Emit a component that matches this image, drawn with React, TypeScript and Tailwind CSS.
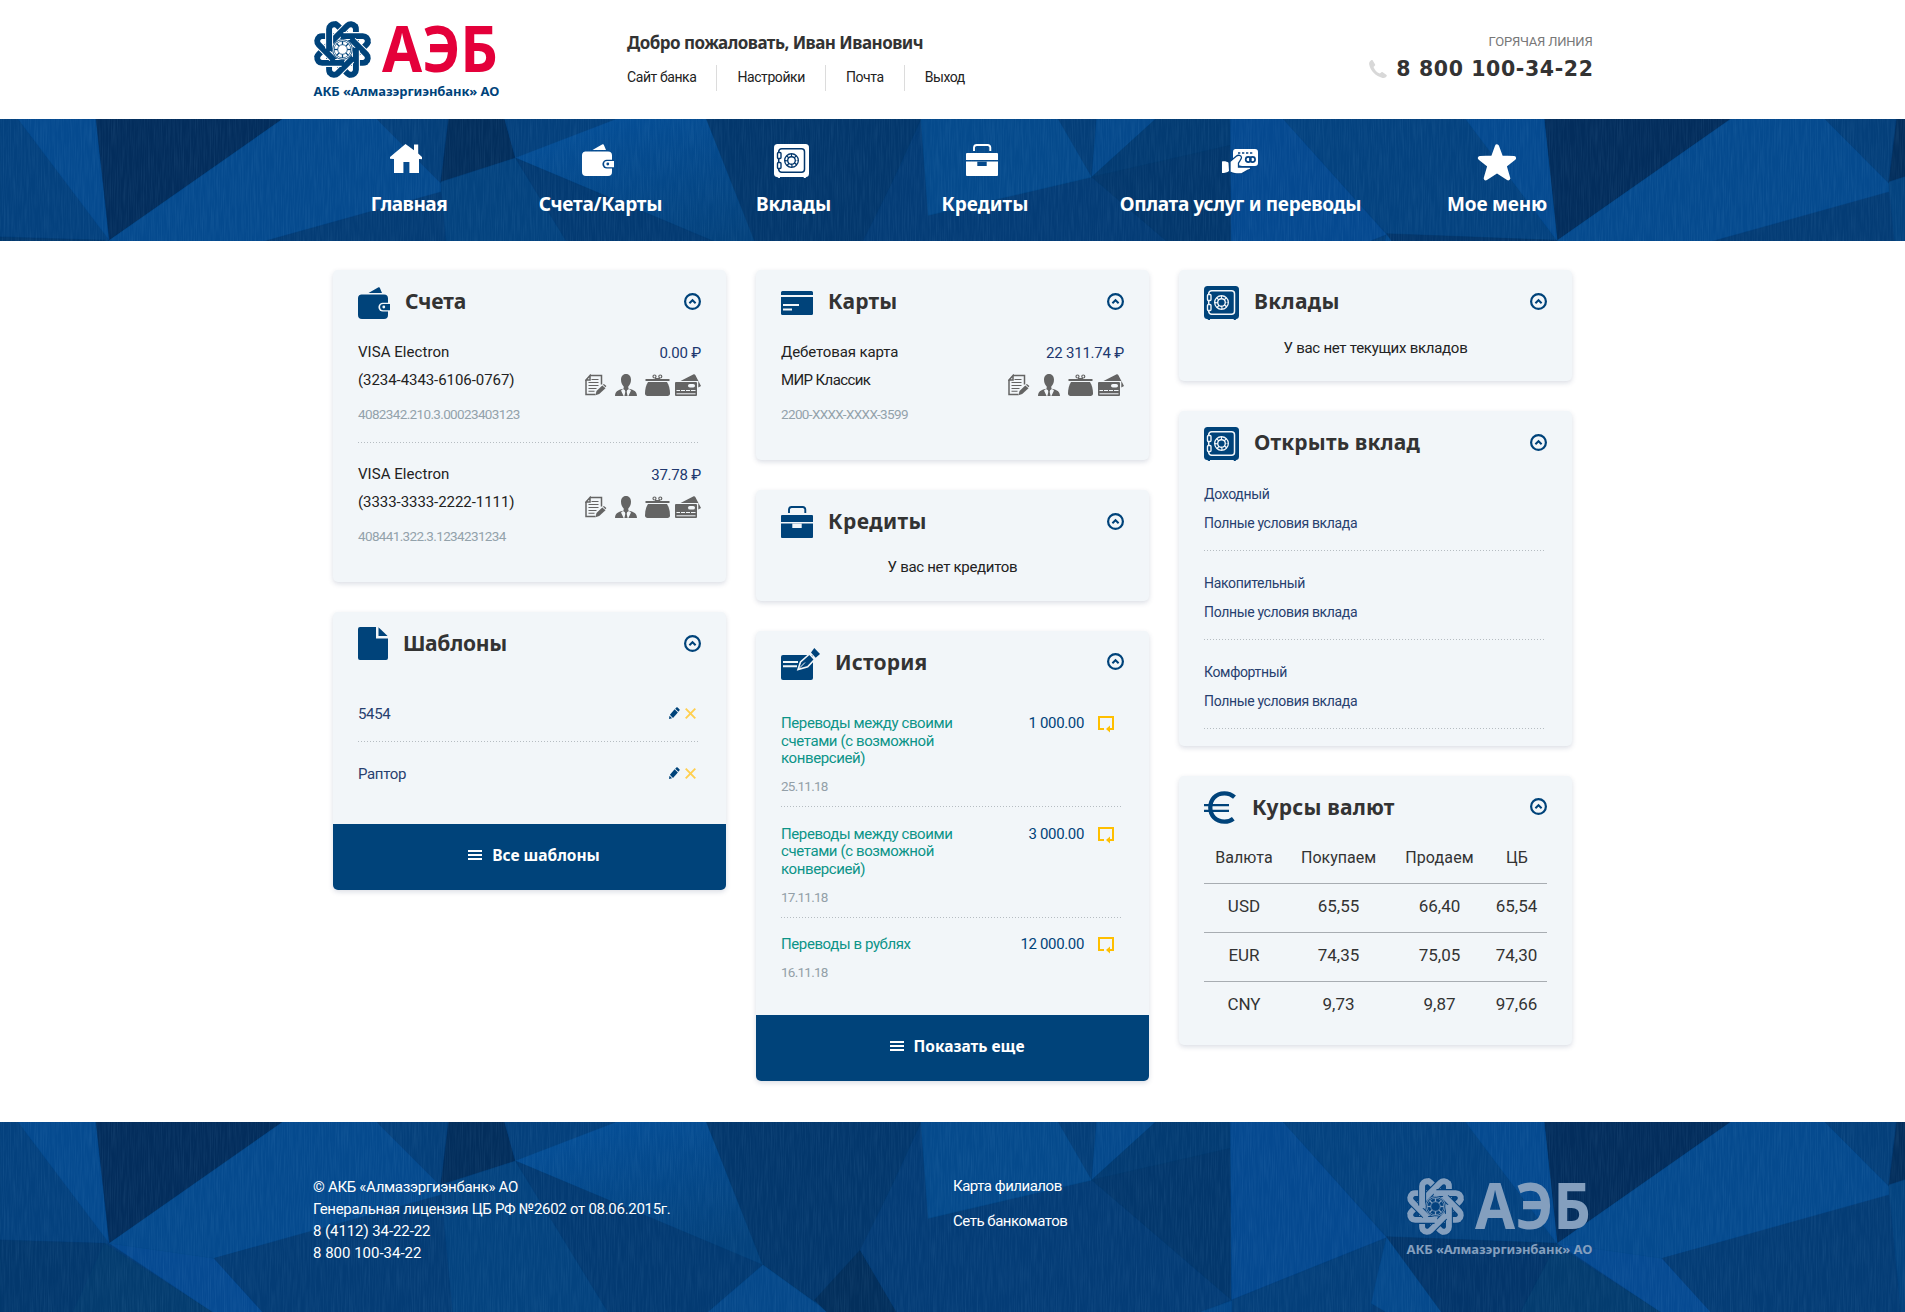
import type { ReactNode } from "react";

/* ---------- faceted blue backdrop ---------- */

const FACETS: [string, string][] = [
  ["#04417e", "0,21 30,21 180,385 0,375"],
  ["#054a8f", "30,21 158,21 180,385"],
  ["#032d5c", "158,21 465,21 180,385"],
  ["#03386d", "0,375 172,385 120,591 0,591"],
  ["#043c6f", "172,385 350,591 120,591"],
  ["#064a92", "180,385 352,430 432,591 350,591"],
  ["#054a8e", "465,21 620,21 725,213 725,245 352,430 180,385"],
  ["#043c75", "352,430 725,240 745,591 432,591"],
  ["#043f7a", "620,21 738,21 725,213"],
  ["#032e5c", "738,21 830,21 848,138 725,213"],
  ["#04407c", "830,21 1015,21 848,138"],
  ["#04437f", "848,138 1000,591 745,591 725,210"],
  ["url(#facetFade)", "1015,21 1162,21 1255,450 848,138"],
  ["#03376c", "1162,21 1515,21 1420,400 1340,560 1255,450"],
  ["#033a72", "848,138 1255,450 1165,591 1000,591"],
  ["#05488a", "1255,450 1362,591 1165,591"],
  ["#032f5c", "1415,405 1475,591 1360,591 1340,555"],
  ["#043c76", "1510,60 1530,310 1796,195 2026,555 1980,591 1475,591 1415,405"],
  ["#054a8c", "1515,21 1741,21 1796,195 1527,310"],
  ["#043e78", "1741,21 1804,21 1796,195"],
  ["#05498c", "1804,21 1901,21 1796,195"],
  ["#033b72", "1901,21 2024,21 2024,100 1796,195"],
  ["#03376c", "1796,195 2024,100 2026,555"],
  ["#054990", "2024,21 2111,21 2281,368 2026,555"],
  ["#04427f", "2111,21 2411,21 2561,385 2281,365"],
  ["#054a90", "2411,21 2540,21 2561,385"],
  ["#043f7a", "2281,368 2026,555 1981,591 2256,591 2266,480"],
  ["#05488a", "2026,558 2026,591 1975,591"],
  ["#05498c", "2281,368 2371,591 2280,591 2256,565 2266,480"],
  ["#03356a", "2281,365 2561,385 2501,591 2371,591"],
];

function Facets() {
  return (
    <>
      {FACETS.map(([fill, points]) => (
        <polygon key={points} points={points} fill={fill} stroke={fill} strokeWidth="1" />
      ))}
    </>
  );
}

function Backdrop() {
  return (
    <svg className="absolute inset-0 h-full w-full" preserveAspectRatio="xMinYMin slice" aria-hidden="true">
      <defs>
        <linearGradient id="facetFade" x1="0" y1="0" x2="0.5" y2="1">
          <stop offset="0" stopColor="#05509a" />
          <stop offset="1" stopColor="#04427d" />
        </linearGradient>
        <filter id="linen" x="0" y="0" width="100%" height="100%">
          <feTurbulence type="fractalNoise" baseFrequency="0.85 0.035" numOctaves="2" seed="4" />
          <feColorMatrix values="0 0 0 0 0.3  0 0 0 0 0.6  0 0 0 0 0.9  0.9 0 0 0 -0.34" />
        </filter>
      </defs>
      <rect width="1905" height="200" fill="#043c76" />
      <g transform="scale(0.60793 0.33333) translate(0 -21)">
        <g transform="translate(2382 0)">
          <Facets />
        </g>
        <Facets />
      </g>
      <rect width="1905" height="200" filter="url(#linen)" opacity="0.18" />
    </svg>
  );
}

/* ---------- logo ---------- */

const TURNS = [0, 1, 2, 3, 4, 5, 6, 7];

/* One petal is a rounded wedge; its right leg passes under the next petal, its left leg over the previous one. */
const RIGHT_LEG = "M0-27A5 5 0 0 1 4.620-23.900L12-6";
const LEFT_LEG = "M2.500-26.300A5 5 0 0 0-4.620-23.900L-12-6";

function Logo({ ink, word, gap, caption }: { ink: string; word: string; gap: string; caption: string }) {
  return (
    <div className="w-[187px]">
      <svg width="187" height="60" viewBox="0 0 187 60" className="block overflow-visible">
        <g transform="translate(29.5 29.5)" fill="none">
          {[RIGHT_LEG, LEFT_LEG].map((leg) =>
            TURNS.map((t) => (
              <g key={leg + t} transform={`rotate(${t * 45 + 22.5})`}>
                <path d={leg} stroke={gap} strokeWidth="8" />
                <path d={leg} stroke={ink} strokeWidth="5.9" strokeLinecap="round" />
              </g>
            )),
          )}
          <circle r="9.900" fill={gap} stroke={ink} strokeWidth="1" />
          <circle r="8.300" stroke={ink} strokeWidth="0.700" />
          <circle r="4.800" stroke={ink} strokeWidth="0.800" />
          {TURNS.map((t) => (
            <path key={t} transform={`rotate(${t * 45})`} d="M0-4.800V-8.400" stroke={ink} strokeWidth="1.300" />
          ))}
        </g>
        <text
          x="69"
          y="52.3"
          textLength="116"
          lengthAdjust="spacingAndGlyphs"
          fill={word}
          className="font-['Noto_Sans',sans-serif] text-[64px] font-bold"
        >
          АЭБ
        </text>
      </svg>
      <div className={`pl-px font-['Noto_Sans',sans-serif] text-[13px] leading-[18px] font-bold tracking-[-0.1px] whitespace-nowrap ${caption}`}>
        АКБ «Алмазэргиэнбанк» АО
      </div>
    </div>
  );
}

/* ---------- icons ---------- */

function HomeIcon() {
  return (
    <svg width="32" height="29" viewBox="0 0 32 29" fill="#fff">
      <path d="M15.5 0 24 6.300V.6h4.200v9L32 13v2.200L29 15v14h-9.600V18h-6v11H4V15l-4-.2V13L15.500 0Z" />
    </svg>
  );
}

function WalletIcon({ hole }: { hole: string }) {
  return (
    <svg width="32" height="32" viewBox="0 0 32 32" fill="currentColor">
      <path d="M10.500 6 20.500.3c.6-.3 1.100-.2 1.300.4L24 6H10.500Z" />
      <path d="M4 7.500h22a4 4 0 0 1 4 4V28a4 4 0 0 1-4 4H4a4 4 0 0 1-4-4V11a3.500 3.500 0 0 1 4-3.500Z" />
      <path d="M24.800 15.700H33v8.800h-8.200a4.400 4.400 0 0 1 0-8.800Z" fill={hole} />
      <path d="M25.200 17H32v6.200h-6.800a3.100 3.100 0 0 1 0-6.200Z" />
      <circle cx="25.800" cy="20" r="1.400" fill={hole} />
    </svg>
  );
}

function SafeIcon({ hole }: { hole: string }) {
  return (
    <svg width="35" height="34" viewBox="0 0 35 34" fill="none">
      <path d="M2 32h4v2H4.500zM29 32h4l-1.500 2H30z" fill="currentColor" />
      <rect width="35" height="33" rx="3.500" fill="currentColor" />
      <rect x="4.700" y="4.700" width="25.800" height="23.600" rx="3" stroke={hole} strokeWidth="1.500" />
      <g fill="currentColor" stroke={hole} strokeWidth="1.400">
        <rect x="3.500" y="8.500" width="3.500" height="6" rx="1" />
        <rect x="3.500" y="18.500" width="3.500" height="6" rx="1" />
      </g>
      <circle cx="17.500" cy="16.500" r="5.300" stroke={hole} strokeWidth="4.400" />
      <circle cx="17.500" cy="16.500" r="5.300" stroke="currentColor" strokeWidth="1.700" strokeDasharray="2.900 1.260" />
    </svg>
  );
}

function BriefcaseIcon({ hole }: { hole: string }) {
  return (
    <svg width="32" height="32" viewBox="0 0 32 32" fill="currentColor">
      <path d="M8 7V3.500A2.700 2.700 0 0 1 10.700 1h11A2.700 2.700 0 0 1 24.300 3.500V7" fill="none" stroke="currentColor" strokeWidth="1.900" />
      <path d="M1 9h30a1 1 0 0 1 1 1v6H0v-6a1 1 0 0 1 1-1Z" />
      <path d="M0 17.600h32V31a1 1 0 0 1-1 1H1a1 1 0 0 1-1-1Z" />
      <path d="M11.300 17.600h9.400v4.400h-9.400z" fill={hole} />
    </svg>
  );
}

function HandCardIcon() {
  return (
    <svg width="36" height="25" viewBox="0 0 36 25">
      <path d="M13 0h20a3 3 0 0 1 3 3v11a3 3 0 0 1-3 3H20l-9-2V3a3 3 0 0 1 2-3Z" fill="#fff" />
      <path d="M16 4h2.300M20 4h2.300M24 4h2.300M28 4h2.300" stroke="#044282" strokeWidth="1.600" />
      <circle cx="26.300" cy="10.500" r="2.600" fill="none" stroke="#044282" strokeWidth="1.700" />
      <circle cx="30.500" cy="10.500" r="2.600" fill="none" stroke="#044282" strokeWidth="1.700" />
      <path
        d="M8 12.500 14.500 7c1.800-1.400 4.800-.8 5 1.500.1 1.500-1.500 3-3 5.500V18l12 .2c1 2-1 2.500-2.500 3l-6 3.300c-3 1-9 .5-12-1.500Z"
        fill="#fff"
        stroke="#044282"
        strokeWidth="1.300"
      />
      <path d="M0 12.500c3-.5 5 .2 6.500 1.200L7 22c-1.500 1.500-4.500 2-7 2Z" fill="#fff" />
    </svg>
  );
}

function StarIcon() {
  return (
    <svg width="40" height="37" viewBox="0 0 40 37">
      <path
        d="M20 2.500 24 13.500 37 14 27.500 21.500 31.200 34.300 20 27 8.800 34.300 12.500 21.500 3 14 16 13.500Z"
        fill="#fff"
        stroke="#fff"
        strokeWidth="4.200"
        strokeLinejoin="round"
      />
    </svg>
  );
}

function FileIcon() {
  return (
    <svg width="30" height="33" viewBox="0 0 30 33" fill="currentColor">
      <path d="M2 0h16v11.500h12V31a2 2 0 0 1-2 2H2a2 2 0 0 1-2-2V2a2 2 0 0 1 2-2Z" />
      <path d="M20.500.3 29.600 9h-9.100Z" />
    </svg>
  );
}

function CardIcon() {
  return (
    <svg width="32" height="24" viewBox="0 0 32 24" fill="currentColor">
      <path d="M1.500 0h29A1.500 1.500 0 0 1 32 1.500V4H0V1.500A1.500 1.500 0 0 1 1.500 0Z" />
      <path d="M0 6h32v16.500a1.500 1.500 0 0 1-1.500 1.500h-29A1.500 1.500 0 0 1 0 22.500Z" />
      <path d="M2 14h16M2 18.500h9" stroke="#f2f6f9" strokeWidth="2" />
    </svg>
  );
}

function HistoryIcon() {
  return (
    <svg width="39" height="32" viewBox="0 0 39 32" fill="currentColor">
      <rect y="7" width="32" height="25" rx="2" />
      <path d="M2 14h15M2 18.300h14" stroke="#f2f6f9" strokeWidth="2" />
      <path d="M17 21.500 19.500 14 28.500 6l5 5.500-6.800 7.200Z" stroke="#f2f6f9" strokeWidth="1.600" />
      <path d="M17.500 21 24 14.500" stroke="#f2f6f9" strokeWidth="1" />
      <path d="M30 4.500 33.300 0 39 6l-4.300 3.700Z" />
    </svg>
  );
}

function EuroIcon() {
  return (
    <svg width="33" height="33" viewBox="0 0 33 33" fill="none" stroke="currentColor">
      <path d="M30.500 6.200C27.500 3.500 24.500 2.300 20.500 2.300 11.500 2.300 6.300 8.500 6.300 16.500S11.500 30.700 20.500 30.700c3.500 0 6.300-1 8.800-3" strokeWidth="4.300" />
      <path d="M0 14.200h25M0 19.800h25" strokeWidth="2.300" />
    </svg>
  );
}

function ToggleIcon() {
  return (
    <svg width="17" height="17" viewBox="0 0 17 17" fill="none" stroke="#00437a">
      <circle cx="8.500" cy="8.500" r="7.400" strokeWidth="2.200" />
      <path d="M5.400 10.200 8.500 7.200l3.100 3" strokeWidth="2" />
    </svg>
  );
}

function AccountActions() {
  return (
    <svg width="116" height="23" viewBox="0 0 116 23" fill="#646464">
      <path d="M4.500 1.600h12v9M1 5.500v14.900h9.500M1 6l4-4.500V6Z" fill="none" stroke="#646464" strokeWidth="1.500" />
      <path d="M6.500 5.500h7M3.500 8.500h10M3.500 11.500h10M3.500 14.500h8M3.500 17.200h6" stroke="#646464" strokeWidth="1.100" />
      <path d="m11.500 17 5.800-5.600 3.200 2.900L14.200 20l-3.700 1.300Z" />
      <path d="m17.900 10.800 1-.9 2.500 2.200-.9 1.100Z" />
      <path d="M41 0c3.300 0 5 2.600 5 5.800 0 3-1.300 5.500-2.700 6.700v1.900c3.200 1.100 8.700 1.600 8.700 7.600H30c0-6 5.500-6.500 8.700-7.600v-1.900C37.300 11.300 36 8.800 36 5.800 36 2.600 37.700 0 41 0Z" />
      <path d="m38 15-2 1.500 2.600 5.500h4.800l2.600-5.500-2-1.500-3 1.800Z" fill="#f2f6f9" />
      <path d="M39.800 16h2.400l-.5 1.700.9 4.300h-3.200l.9-4.300Z" />
      <path d="M60.500 5h24v2h-24z" />
      <circle cx="69.500" cy="2.500" r="1.500" fill="none" stroke="#646464" strokeWidth="1.200" />
      <circle cx="75.300" cy="2.500" r="1.500" fill="none" stroke="#646464" strokeWidth="1.200" />
      <path d="M70 4h5v1.500h-5z" />
      <path d="M63 8h19c2 3 3 7 3 11.500 0 1.500-1 2.500-2.500 2.500h-20c-1.500 0-2.500-1-2.500-2.500C60 15 61 11 63 8Z" />
      <path d="m95.500 7 12.700-6.500c.9-.5 1.700-.3 2.100.6L116 12l-2.700 1.400V7Z" />
      <rect x="90" y="8" width="22" height="14" rx="1" />
      <rect x="103" y="10" width="7" height="3.600" rx="1.800" fill="#f2f6f9" />
      <path d="M91.500 16.500h19M91.500 19.800h19" stroke="#f2f6f9" strokeWidth="1" />
      <path d="M95.500 15v2M100.500 15v2M105.500 15v2" stroke="#646464" strokeWidth="1" />
    </svg>
  );
}

function PencilIcon() {
  return (
    <svg width="11" height="12" viewBox="0 0 11 12" fill="#00437a">
      <path d="M7.300.6a1 1 0 0 1 1.400 0l1.700 1.600a1 1 0 0 1 0 1.400L9.400 4.700 6.200 1.700Z" />
      <path d="M5.600 2.300 8.900 5.400 4 10.900.9 7.800Z" />
      <path d="M.5 8.800 3.100 11.300 0 12Z" />
    </svg>
  );
}

function CrossIcon() {
  return (
    <svg width="11" height="11" viewBox="0 0 11 11" stroke="#ffcf50" strokeWidth="1.900">
      <path d="m.7.700 9.600 9.600M10.300.700.700 10.300" />
    </svg>
  );
}

function RepeatIcon() {
  return (
    <svg width="16" height="17" viewBox="0 0 16 17" fill="none">
      <path d="M6 13H1V1h14v12h-4" stroke="#ffbf00" strokeWidth="2" />
      <path d="M12 9.500V16.500L8 13Z" fill="#ffbf00" />
    </svg>
  );
}

function MenuIcon() {
  return (
    <svg width="14" height="10" viewBox="0 0 14 10" stroke="#fff" strokeWidth="2">
      <path d="M0 1h14M0 5h14M0 9h14" />
    </svg>
  );
}

function PhoneIcon() {
  return (
    <svg width="18" height="18" viewBox="0 0 18 18" fill="#d8d8d8">
      <path d="M3.600.3 6 4.300c.3.600.2 1.100-.3 1.500L4.500 6.900c1.100 3 3.200 5.300 6.300 6.700l1.400-1.200c.5-.4 1-.4 1.500-.1l3.600 2.500c.6.400.7.900.3 1.500-1 1.300-2.500 2-4.100 1.600C6.900 16.500 1.600 11.200.2 4.600-.2 2.800.7 1.200 2.200.2c.6-.4 1-.4 1.400.1Z" />
    </svg>
  );
}

/* ---------- shared pieces ---------- */

function Divider({ className = "" }: { className?: string }) {
  return (
    <div
      className={`h-px w-[342px] bg-[repeating-linear-gradient(90deg,#b6bdc2_0_1px,transparent_1px_3px)] ${className}`}
    />
  );
}

function Card({
  icon,
  iconTop,
  title,
  tracking = "tracking-[0.15px]",
  height,
  action,
  children,
}: {
  icon: ReactNode;
  iconTop: string;
  title: string;
  tracking?: string;
  height: string;
  action?: string;
  children: ReactNode;
}) {
  return (
    <section className={`flex w-[393px] flex-col overflow-hidden rounded-[5px] bg-[#f2f6f9] shadow-[0_2px_5px_rgba(40,60,100,0.17)] ${height}`}>
      <header className="flex h-[62px] shrink-0 items-center px-[25px]">
        <div className={`shrink-0 self-start text-[#00437a] ${iconTop}`}>{icon}</div>
        <h2 className={`ml-[15px] grow font-['Noto_Sans',sans-serif] text-[21px] leading-7 font-bold text-[#333] ${tracking}`}>
          {title}
        </h2>
        <ToggleIcon />
      </header>
      <div className="grow px-[25px]">{children}</div>
      {action && (
        <button className="flex h-[66px] shrink-0 items-center justify-center gap-[10px] bg-[#00437a] pr-px pl-[10px] pb-[4px] font-['Noto_Sans',sans-serif] text-[15.5px] leading-6 font-bold text-white">
          <MenuIcon />
          <span>{action}</span>
        </button>
      )}
    </section>
  );
}

function Account({
  lines,
  tracking,
  number,
  amount,
}: {
  lines: [string, string];
  tracking: [string, string];
  number: string;
  amount: string;
}) {
  return (
    <div className="flex justify-between">
      <div>
        <div className={`text-[15px] leading-7 text-[#222] ${tracking[0]}`}>{lines[0]}</div>
        <div className={`text-[15px] leading-7 text-[#222] ${tracking[1]}`}>{lines[1]}</div>
        <div className="mt-2 mb-px text-[13.5px] leading-6 tracking-[-0.64px] text-[#93a2ab]">{number}</div>
      </div>
      <div className="flex flex-col items-end pt-px">
        <div className="text-[15px] leading-7 tracking-[-0.22px] text-[#20386f]">{amount}</div>
        <div className="mt-[7px]">
          <AccountActions />
        </div>
      </div>
    </div>
  );
}

function Template({ name }: { name: string }) {
  return (
    <div className="flex h-6 items-center justify-between pr-[5px]">
      <span className="text-[15px] leading-6 tracking-[-0.35px] text-[#27406f]">{name}</span>
      <span className="flex items-center gap-[5px] pb-[2px]">
        <PencilIcon />
        <CrossIcon />
      </span>
    </div>
  );
}

function Transfer({ name, date, amount }: { name: string; date: string; amount: string }) {
  return (
    <div className="flex items-start">
      <div className="w-[190px]">
        <div className="text-[15px] leading-[17.6px] tracking-[-0.4px] text-[#0c9488]">{name}</div>
        <div className="mt-[6.6px] mb-[1.400px] text-[13.5px] leading-6 tracking-[-0.75px] text-[#93a0a8]">{date}</div>
      </div>
      <div className="w-[113px] text-right text-[15px] leading-[17.6px] tracking-[-0.35px] text-[#00437a]">{amount}</div>
      <div className="ml-[14px] pt-px">
        <RepeatIcon />
      </div>
    </div>
  );
}

function Offer({ name }: { name: string }) {
  return (
    <div className="mb-[18.5px] text-[14px] leading-[29px] tracking-[-0.34px] text-[#27406f]">
      <div>{name}</div>
      <div>Полные условия вклада</div>
      <Divider className="mt-[11.5px]" />
    </div>
  );
}

const NAV: { label: string; box: string; icon: ReactNode; shift: string }[] = [
  { label: "Главная", box: "ml-[59px] w-[75px] tracking-[-0.5px]", icon: <HomeIcon />, shift: "-ml-[6px]" },
  { label: "Счета/Карты", box: "ml-[93px] w-[122px] tracking-[-0.2px]", icon: <WalletIcon hole="#05478a" />, shift: "-ml-[6px]" },
  { label: "Вклады", box: "ml-[95px] w-[74px] tracking-[-0.1px]", icon: <SafeIcon hole="#03376c" />, shift: "-ml-[5px]" },
  { label: "Кредиты", box: "ml-[112px] w-[85px]", icon: <BriefcaseIcon hole="#05498b" />, shift: "-ml-[6px]" },
  { label: "Оплата услуг и переводы", box: "ml-[92px] w-[242px] tracking-[-0.3px]", icon: <HandCardIcon />, shift: "-ml-[2px] mt-[5px]" },
  { label: "Мое меню", box: "ml-[86px] w-[99px] tracking-[-0.2px]", icon: <StarIcon />, shift: "" },
];

const RATES = [
  ["USD", "65,55", "66,40", "65,54"],
  ["EUR", "74,35", "75,05", "74,30"],
  ["CNY", "9,73", "9,87", "97,66"],
];

const LINKS = ["Сайт банка", "Настройки", "Почта", "Выход"];

export default function App() {
  return (
    <div className="h-[1312px] w-[1905px] overflow-hidden bg-white font-['Roboto',sans-serif] text-[#333]">
      <header className="mx-auto flex h-[119px] w-[1280px]">
        <div className="w-[314.5px] pt-5">
          <Logo ink="#00437a" word="#e4003a" gap="#fff" caption="text-[#00437a] pt-[2px]" />
        </div>
        <div className="pt-[31px]">
          <div className="font-['Noto_Sans',sans-serif] text-[17px] leading-6 font-bold tracking-[-0.52px] whitespace-nowrap text-[#333]">
            Добро пожаловать, Иван Иванович
          </div>
          <nav className="mt-[10px] flex text-[14px] leading-[24px] tracking-[-0.42px] text-[#222]">
            {LINKS.map((l) => (
              <a key={l} className="border-r border-[#dcdcdc] px-5 pb-[2px] first:pl-0 last:border-r-0">
                {l}
              </a>
            ))}
          </nav>
        </div>
        <div className="ml-auto flex flex-col items-end pt-[34px]">
          <div className="text-[13px] leading-4 tracking-[-0.2px] text-[#777]">ГОРЯЧАЯ ЛИНИЯ</div>
          <div className="mt-[7px] flex items-center gap-[9px]">
            <PhoneIcon />
            <span className="-mr-px font-['DejaVu_Sans',sans-serif] text-[20.5px] leading-6 font-bold tracking-[0.6px] text-[#333]">
              8 800 100-34-22
            </span>
          </div>
        </div>
      </header>

      <div className="relative h-[122px] overflow-hidden bg-[#043c76]">
        <Backdrop />
        <nav className="relative mx-auto flex w-[1280px] pt-[25px]">
          {NAV.map((n) => (
            <a
              key={n.label}
              className={`flex flex-col items-center font-['Noto_Sans',sans-serif] text-[19px] leading-[26px] font-bold whitespace-nowrap text-white ${n.box}`}
            >
              <span className="h-[47px]">
                <span className={`block ${n.shift}`}>{n.icon}</span>
              </span>
              <span>{n.label}</span>
            </a>
          ))}
        </nav>
      </div>

      <main className="mx-auto flex h-[881px] w-[1239px] gap-[30px] pt-[29px]">
        <div className="flex flex-col gap-[30px]">
          <Card icon={<WalletIcon hole="#f2f6f9" />} iconTop="mt-[17px]" title="Счета" tracking="tracking-[-0.1px]" height="h-[312px]">
            <div className="pt-[6px]">
              <Account
                lines={["VISA Electron", "(3234-4343-6106-0767)"]}
                tracking={["tracking-[0.05px]", "tracking-[-0.06px]"]}
                number="4082342.210.3.00023403123"
                amount="0.00 ₽"
              />
              <Divider className="mt-[15px] mb-[17px]" />
              <Account
                lines={["VISA Electron", "(3333-3333-2222-1111)"]}
                tracking={["tracking-[0.05px]", "tracking-[-0.06px]"]}
                number="408441.322.3.1234231234"
                amount="37.78 ₽"
              />
            </div>
          </Card>
          <Card icon={<FileIcon />} iconTop="mt-[15px]" title="Шаблоны" tracking="tracking-[-0.3px]" height="h-[278px]" action="Все шаблоны">
            <div className="pt-7">
              <Template name="5454" />
              <Divider className="mt-[15px] mb-5" />
              <Template name="Раптор" />
            </div>
          </Card>
        </div>

        <div className="flex flex-col gap-[30px]">
          <Card icon={<CardIcon />} iconTop="mt-[21px]" title="Карты" height="h-[190px]">
            <div className="pt-[6px]">
              <Account
                lines={["Дебетовая карта", "МИР Классик"]}
                tracking={["tracking-[-0.1px]", "tracking-[-0.6px]"]}
                number="2200-XXXX-XXXX-3599"
                amount="22 311.74 ₽"
              />
            </div>
          </Card>
          <Card icon={<BriefcaseIcon hole="#f2f6f9" />} iconTop="mt-4" title="Кредиты" tracking="tracking-[0.4px]" height="h-[110.6px]">
            <p className="pt-[3px] text-center text-[15px] leading-6 tracking-[-0.3px] text-[#222]">У вас нет кредитов</p>
          </Card>
          <Card icon={<HistoryIcon />} iconTop="mt-[17px]" title="История" height="h-[450.4px]" action="Показать еще">
            <div className="pt-[22.4px]">
              <Transfer name="Переводы между своими счетами (с возможной конверсией)" date="25.11.18" amount="1 000.00" />
              <Divider className="mt-[6.600px] mb-[18.200px]" />
              <Transfer name="Переводы между своими счетами (с возможной конверсией)" date="17.11.18" amount="3 000.00" />
              <Divider className="mt-[7px] mb-[18px]" />
              <Transfer name="Переводы в рублях" date="16.11.18" amount="12 000.00" />
            </div>
          </Card>
        </div>

        <div className="flex flex-col gap-[30px]">
          <Card icon={<SafeIcon hole="#f2f6f9" />} iconTop="mt-4" title="Вклады" tracking="tracking-[0.35px]" height="h-[111.4px]">
            <p className="pt-1 text-center text-[15px] leading-6 tracking-[-0.27px] text-[#222]">У вас нет текущих вкладов</p>
          </Card>
          <Card icon={<SafeIcon hole="#f2f6f9" />} iconTop="mt-4" title="Открыть вклад" height="h-[334.2px]">
            <div className="pt-[7px]">
              <Offer name="Доходный" />
              <Offer name="Накопительный" />
              <Offer name="Комфортный" />
            </div>
          </Card>
          <Card icon={<EuroIcon />} iconTop="mt-[15px]" title="Курсы валют" tracking="tracking-[0.2px]" height="h-[269.4px]">
            <div className="text-center leading-6">
              <div className="grid h-[46px] grid-cols-[80px_109px_93px_61px] border-b border-[#a8adb2] pt-[8px] text-[16px]">
                <span>Валюта</span>
                <span>Покупаем</span>
                <span className="tracking-[0.15px]">Продаем</span>
                <span className="pl-px">ЦБ</span>
              </div>
              {RATES.map((r) => (
                <div
                  key={r[0]}
                  className="grid h-[49px] grid-cols-[80px_109px_93px_61px] border-b border-[#a8adb2] pt-[10px] text-[17px] last:border-b-0"
                >
                  {r.map((c) => (
                    <span key={c}>{c}</span>
                  ))}
                </div>
              ))}
            </div>
          </Card>
        </div>
      </main>

      <footer className="relative h-[190px] overflow-hidden bg-[#043c76]">
        <Backdrop />
        <div className="relative mx-auto flex w-[1280px] text-[15px] text-white">
          <div className="w-[640.5px] pt-[54px] pl-[0.5px] leading-[22px]">
            <p className="tracking-[-0.3px]">© АКБ «Алмазэргиэнбанк» АО</p>
            <p className="tracking-[-0.29px]">Генеральная лицензия ЦБ РФ №2602 от 08.06.2015г.</p>
            <p className="tracking-[-0.08px]">8 (4112) 34-22-22</p>
            <p>8 800 100-34-22</p>
          </div>
          <div className="pt-[47px] leading-[35px] tracking-[-0.48px]">
            <p>Карта филиалов</p>
            <p>Сеть банкоматов</p>
          </div>
          <div className="ml-auto pt-[55px]">
            <Logo ink="#849fbe" word="#849fbe" gap="#04427f" caption="text-[#849fbe] pt-[3px]" />
          </div>
        </div>
      </footer>
    </div>
  );
}
